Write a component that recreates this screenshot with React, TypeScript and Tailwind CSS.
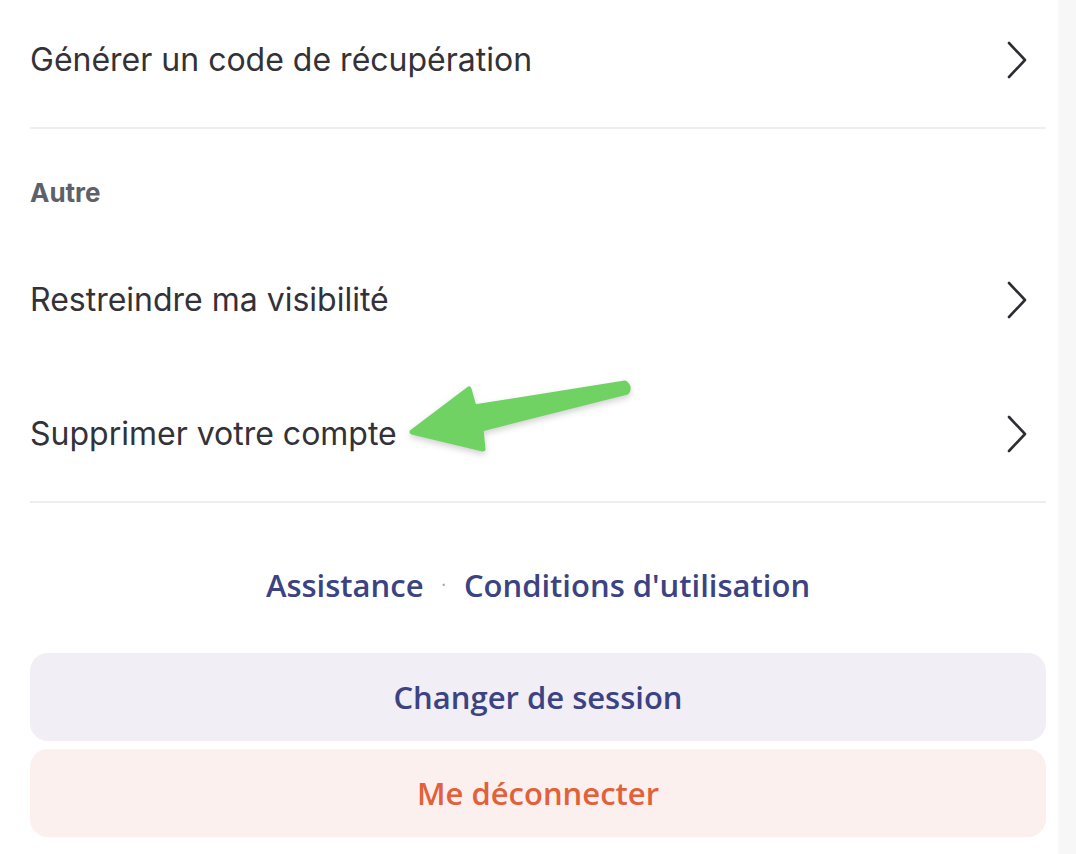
import React from 'react';

function Chevron() {
  return (
    <svg width="22" height="38" viewBox="0 0 22 38" fill="none" className="shrink-0">
      <path d="M3 2 L19 19 L3 36" stroke="#2d2d33" strokeWidth="2.6" strokeLinecap="round" strokeLinejoin="round" />
    </svg>
  );
}

function Row({ label }: { label: string }) {
  return (
    <div className="flex h-[134px] items-center justify-between pr-[18px]">
      <span className="text-[32px] text-[#323238]">{label}</span>
      <Chevron />
    </div>
  );
}

export default function App() {
  return (
    <div className="flex h-[854px] w-[1076px] overflow-hidden bg-white font-['Inter',sans-serif]">
      <div className="relative w-[1058px] pl-[30px] pr-[12px]">
        <div className="-mt-[7px]">
          <Row label="Générer un code de récupération" />
        </div>
        <div className="h-[2px] bg-[#eeeeee]" />

        <div className="pt-[48px] pb-[24px] text-[26px] font-bold leading-[32px] text-[#5c616b]">Autre</div>
        <Row label="Restreindre ma visibilité" />
        <Row label="Supprimer votre compte" />
        <div className="h-[2px] bg-[#eeeeee]" />

        <div className="flex h-[150px] items-center justify-center gap-[18px] pt-[14px] font-['Open_Sans',sans-serif] text-[31px] font-semibold text-[#3b4383]">
          <span>Assistance</span>
          <span className="text-[16px] text-[#a8a8ae]">·</span>
          <span>Conditions d'utilisation</span>
        </div>

        <div className="flex flex-col gap-[8px] font-['Open_Sans',sans-serif] text-[31px] font-semibold">
          <button className="flex h-[88px] items-center justify-center rounded-[18px] bg-[#f1eef5] text-[#3b4383]">
            Changer de session
          </button>
          <button className="flex h-[88px] items-center justify-center rounded-[18px] bg-[#fbf0ee] text-[#e2603a]">
            Me déconnecter
          </button>
        </div>

        <svg className="pointer-events-none absolute left-0 top-0 drop-shadow-[0_3px_3px_rgba(0,0,0,0.18)]" width="700" height="480" viewBox="0 0 700 480">
          <path
            d="M412 432 L469 389 L474 407 L625 383 Q630 387 627 392 L481 429 L483 449 Z"
            fill="#6fd263"
            stroke="#6fd263"
            strokeWidth="5"
            strokeLinejoin="round"
          />
        </svg>
      </div>
      <div className="w-[18px] bg-[#f7f7f7]" />
    </div>
  );
}
